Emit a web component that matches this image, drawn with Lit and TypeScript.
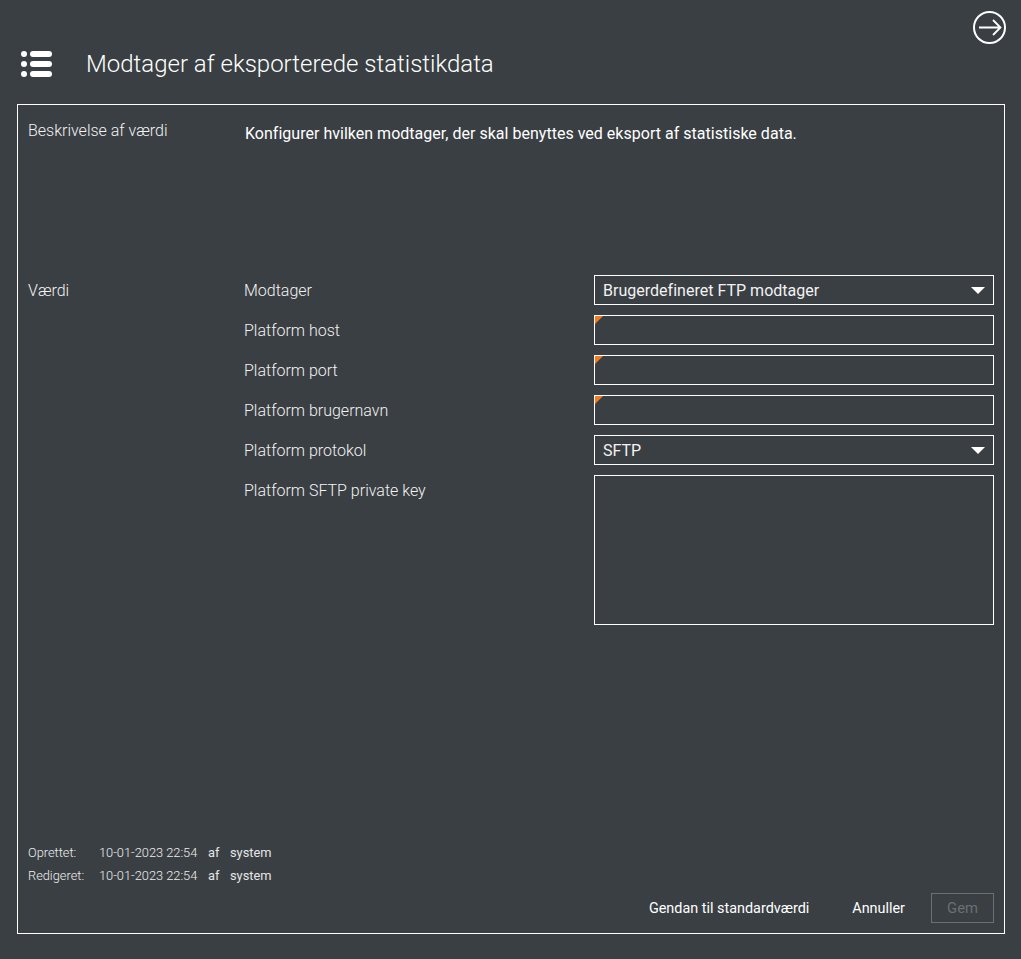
import { LitElement, html, css } from "lit";
import { customElement } from "lit/decorators.js";

const arrow = html`<svg class="exit" viewBox="0 0 33 33" width="33" height="33" fill="none" stroke="#fff" stroke-width="2"><circle cx="16.500" cy="16.500" r="15.500"/><path d="M6 16.500H27.500M20 9L27.500 16.500L20 24" stroke-width="1.800"/></svg>`;
const list = html`<svg class="list" viewBox="0 0 31 26" width="31" height="26" fill="#fff"><circle cx="3" cy="3" r="3"/><circle cx="3" cy="13" r="3"/><circle cx="3" cy="23" r="3"/><rect x="9" y="0" width="22" height="6" rx="3"/><rect x="9" y="10" width="22" height="6" rx="3"/><rect x="9" y="20" width="22" height="6" rx="3"/></svg>`;

@customElement("app-root")
export class AppRoot extends LitElement {
  static styles = css`
    :host { display: block; width: 1021px; height: 959px; background: #3a3f43; color: #fff; font-family: Roboto, "Noto Sans", sans-serif; font-size: 16px; overflow: hidden; }
    .page { height: 959px; box-sizing: border-box; padding: 11px 16px 25px 17px; display: flex; flex-direction: column; }
    .exit-row { display: flex; justify-content: flex-end; height: 34px; margin-right: -1px; }
    .header { display: flex; align-items: center; height: 38px; padding-left: 4px; gap: 34px; margin-bottom: 21px; }
    .list { display: block; }
    h1 { margin: 0; font-size: 24px; font-weight: 300; line-height: 38px; color: #fff; }
    .panel { flex: 1; border: 1px solid #fff; padding: 0 10px 10px 10px; display: flex; flex-direction: column; min-height: 0; box-sizing: border-box; }
    .desc-row { display: grid; grid-template-columns: 217px 1fr; height: 170px; padding-top: 16px; box-sizing: border-box; line-height: 20px; }
    .label { color: #f2f2f2; font-weight: 300; }
    .desc { font-weight: 400; padding-top: 3px; letter-spacing: 0.018px; color: #fff; }
    .value-row { display: grid; grid-template-columns: 216px 1fr; flex: 1; }
    .value-label { padding-top: 6px; line-height: 20px; }
    .fields { display: flex; flex-direction: column; gap: 10px; }
    .field { display: grid; grid-template-columns: 350px 400px; }
    .field .label { padding-top: 6px; line-height: 20px; }
    .box { height: 30px; box-sizing: border-box; border: 1px solid #fff; position: relative; padding: 1px 8px 0; line-height: 28px; color: #f2f2f2; letter-spacing: 0.015px; }
    .box.area { height: 150px; }
    .req::before { content: ""; position: absolute; left: 0; top: 0; border-top: 8px solid #f47b20; border-right: 8px solid transparent; }
    .caret { position: absolute; right: 8px; top: 11px; border-top: 7px solid #fff; border-left: 7px solid transparent; border-right: 7px solid transparent; }
    .meta { font-size: 12.800px; display: grid; grid-template-columns: 71px 109px 22px auto; justify-content: start; line-height: 23px; color: #e6e6e6; }
    .meta .k, .meta .d { color: #eee; font-weight: 300; }
    .actions { display: flex; justify-content: flex-end; align-items: center; height: 30px; margin-top: 6px; font-size: 14.400px; }
    .btn { color: #fff; }
    .btn.cancel { margin-left: 42px; margin-right: 26px; }
    .btn.save { width: 63px; height: 30px; box-sizing: border-box; border: 1px solid #6b6f72; color: #6b6f72; display: flex; align-items: center; justify-content: center; font-size: 14.800px; }
    .reset { margin-right: 1px; }
  `;

  private field(label: string, kind: string, value = "") {
    return html`<div class="field">
      <div class="label">${label}</div>
      <div class="box ${kind === "area" ? "area" : ""} ${kind === "req" ? "req" : ""}">${value}${kind === "select" ? html`<span class="caret"></span>` : ""}</div>
    </div>`;
  }

  render() {
    return html`<div class="page">
      <div class="exit-row">${arrow}</div>
      <div class="header">${list}<h1>Modtager af eksporterede statistikdata</h1></div>
      <div class="panel">
        <div class="desc-row">
          <div class="label">Beskrivelse af værdi</div>
          <div class="desc">Konfigurer hvilken modtager, der skal benyttes ved eksport af statistiske data.</div>
        </div>
        <div class="value-row">
          <div class="label value-label">Værdi</div>
          <div class="fields">
            ${this.field("Modtager", "select", "Brugerdefineret FTP modtager")}
            ${this.field("Platform host", "req")}
            ${this.field("Platform port", "req")}
            ${this.field("Platform brugernavn", "req")}
            ${this.field("Platform protokol", "select", "SFTP")}
            ${this.field("Platform SFTP private key", "area")}
          </div>
        </div>
        <div class="meta">
          <span class="k">Oprettet:</span><span class="d">10-01-2023 22:54</span><span>af</span><span>system</span>
          <span class="k">Redigeret:</span><span class="d">10-01-2023 22:54</span><span>af</span><span>system</span>
        </div>
        <div class="actions">
          <span class="btn reset">Gendan til standardværdi</span>
          <span class="btn cancel">Annuller</span>
          <span class="btn save">Gem</span>
        </div>
      </div>
    </div>`;
  }
}
